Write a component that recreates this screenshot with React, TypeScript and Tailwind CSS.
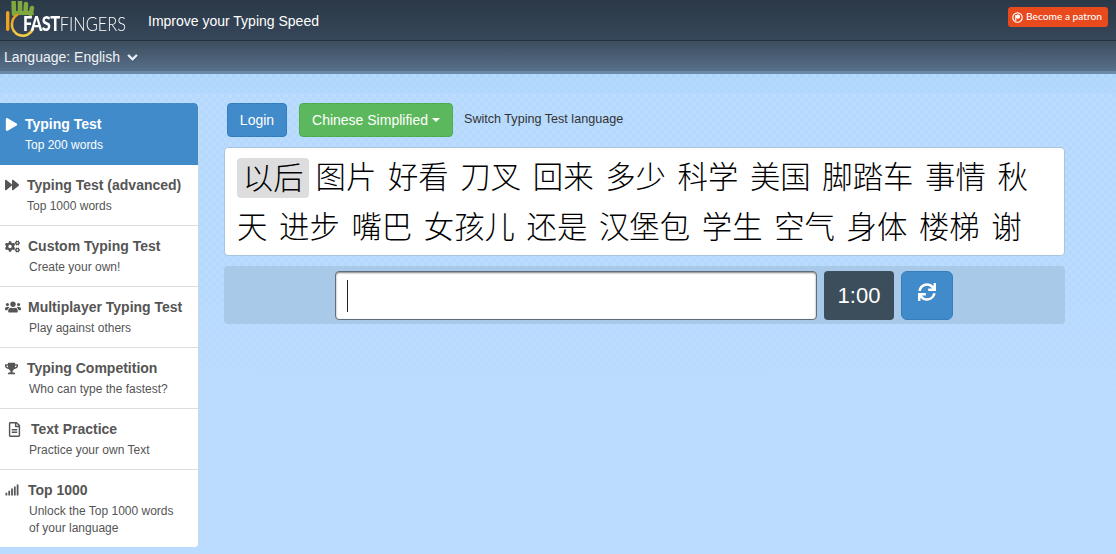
import React from 'react';
import { FaPlay, FaForward, FaCogs, FaUsers, FaTrophy, FaRegFileAlt, FaSignal, FaChevronDown, FaSync } from 'react-icons/fa';

const sans = { fontFamily: '"Liberation Sans", Arial, sans-serif' };

const menuItems = [
  { icon: <FaPlay size={13} />, title: 'Typing Test', sub: 'Top 200 words', active: true, iconBox: 'w-[25px] pl-[5px]', subPad: 'pl-[25px]' },
  { icon: <FaForward size={14} />, title: 'Typing Test (advanced)', sub: 'Top 1000 words', iconBox: 'w-[27px] pl-[5px]', subPad: 'pl-[27px]' },
  { icon: <FaCogs size={15} />, title: 'Custom Typing Test', sub: 'Create your own!', iconBox: 'w-[28px] pl-[5px]', subPad: 'pl-[29px]' },
  { icon: <FaUsers size={16} />, title: 'Multiplayer Typing Test', sub: 'Play against others', iconBox: 'w-[28px] pl-[5px]', subPad: 'pl-[29px]' },
  { icon: <FaTrophy size={13} />, title: 'Typing Competition', sub: 'Who can type the fastest?', iconBox: 'w-[27px] pl-[5px]', subPad: 'pl-[29px]' },
  { icon: <FaRegFileAlt size={15} />, title: 'Text Practice', sub: 'Practice your own Text', iconBox: 'w-[31px] pl-[7px]', subPad: 'pl-[29px]' },
  { icon: <FaSignal size={14} />, title: 'Top 1000', sub: 'Unlock the Top 1000 words of your language', iconBox: 'w-[28px] pl-[5px]', subPad: 'pl-[29px] pr-[20px]' },
];

const words = ['图片', '好看', '刀叉', '回来', '多少', '科学', '美国', '脚踏车', '事情', '秋天', '进步', '嘴巴', '女孩儿', '还是', '汉堡包', '学生', '空气', '身体', '楼梯', '谢'];

const Logo = () => (
  <div className="relative w-[130px] h-[40px] shrink-0">
    <svg width="130" height="40" viewBox="0 0 130 40" className="absolute left-0 top-0">
      <defs>
        <linearGradient id="ring" x1="0" y1="0" x2="0" y2="1">
          <stop offset="0" stopColor="#e99a1f" />
          <stop offset="1" stopColor="#f6cf45" />
        </linearGradient>
      </defs>
      {/* hand */}
      <g stroke="#7fa83e" strokeWidth="4.5" strokeLinecap="round" fill="none">
        <path d="M14 13 L13.5 -2" />
        <path d="M20 12 L20 0" />
        <path d="M25.5 12 L26 3" />
        <path d="M30.5 13 L32 7" />
      </g>
      <path d="M12 10 H33 L34 14 H12 Z" fill="#7fa83e" />
      {/* one */}
      <rect x="6" y="10" width="3.4" height="20" rx="1.7" fill="#eea323" />
      {/* zero */}
      <path d="M17 14 A11 11 0 0 0 12 22 A11 11 0 0 0 33 28" fill="none" stroke="url(#ring)" strokeWidth="2.6" strokeLinecap="round" />
    </svg>
    <span
      className="absolute left-[23px] top-[11px] text-[20px] leading-[22px] text-white origin-left scale-x-[0.82] whitespace-nowrap"
      style={{ fontFamily: 'Lato, sans-serif' }}
    >
      <span className="font-black tracking-[-0.6px]">FAST</span>
      <span className="font-light">FINGERS</span>
    </span>
  </div>
);

const PatronMark = () => (
  <svg width="11" height="11" viewBox="0 0 14 14" className="shrink-0">
    <circle cx="7" cy="7" r="6" fill="none" stroke="#fff" strokeWidth="1.5" />
    <circle cx="7.6" cy="6" r="2.7" fill="#fff" />
    <rect x="4" y="4" width="1.5" height="7" fill="#fff" />
  </svg>
);

const MenuItem = ({ item, last }: { item: (typeof menuItems)[number]; last: boolean }) => (
  <div
    className={`block ${item.active ? 'h-[62px] bg-[#428bca] text-white rounded-tr-[4px] pt-[12px]' : 'text-[#555555] pt-[11px]'} ${
      !item.active && !last ? 'h-[61px] border-b border-[#dddddd]' : ''
    } ${last ? 'h-[77px]' : ''}`}
  >
    <div className="flex items-center h-[18px]">
      <span className={`${item.iconBox} flex items-center`}>{item.icon}</span>
      <span className="text-[14px] font-bold leading-[18px] whitespace-nowrap">{item.title}</span>
    </div>
    <p className={`${item.subPad} text-[12px] leading-[17px] mt-[4px]`}>{item.sub}</p>
  </div>
);

export default function App() {
  return (
    <div className="h-[554px] w-[1116px] overflow-hidden bg-[#bbdcfe] text-[#333333]" style={sans}>
      {/* Header */}
      <header>
        <div className="h-[41px] flex items-center bg-gradient-to-b from-[#2b3947] to-[#36475a] border-b border-[#26323d]">
          <div className="pt-[1px]">
            <Logo />
          </div>
          <span className="ml-[18px] pt-[2px] text-[14px] text-white">Improve your Typing Speed</span>
          <a
            className="ml-auto mr-[8px] mb-[6px] w-[100px] h-[20px] pl-[4px] rounded-[3px] bg-[#e8491d] text-white text-[10.2px] font-medium flex items-center gap-[3px] whitespace-nowrap"
            style={{ fontFamily: 'Lato, sans-serif' }}
          >
            <PatronMark />
            Become a patron
          </a>
        </div>
        <div className="h-[33px] flex items-center bg-gradient-to-b from-[#3c4d5e] to-[#58708a] border-b-[3px] border-[#6b8aa8] pl-[4px] pt-[2px] text-[14px] text-[#eef2f5]">
          Language: English
          <FaChevronDown size={11} className="ml-[7px] mt-[1px] stroke-current stroke-[30]" />
        </div>
      </header>

      {/* Main */}
      <main className="relative flex items-start pt-[29px] h-[480px] bg-gradient-to-b from-[#abd6fb] from-[0px] via-[#afd8fc] via-[19px] to-[#bbdcfe] to-[20px]">
        {/* dither texture that fades out down the page */}
        <div className="absolute inset-0 pointer-events-none bg-[repeating-conic-gradient(#b4d9fd_0_25%,transparent_0_50%)] bg-[length:8px_8px] [mask-image:linear-gradient(to_bottom,black_0px,black_200px,transparent_320px)]" />

        <nav className="relative w-[199px] shrink-0 bg-white rounded-r-[4px] overflow-hidden border-r border-[#c9d9e8]">
          {menuItems.map((item, i) => (
            <MenuItem key={item.title} item={item} last={i === menuItems.length - 1} />
          ))}
        </nav>

        <section className="relative w-[841px] ml-[25px]">
          <div className="flex items-start ml-[3px] h-[44px]">
            <button className="w-[60px] h-[34px] rounded-[4px] bg-[#428bca] border border-[#357ebd] text-white text-[14px]">Login</button>
            <button className="ml-[12px] w-[154px] h-[34px] rounded-[4px] bg-[#5cb85c] border border-[#4cae4c] text-white text-[14px] flex items-center justify-center gap-[4px]">
              Chinese Simplified
              <span className="w-0 h-0 border-x-[4px] border-x-transparent border-t-[4px] border-t-white" />
            </button>
            <span className="ml-[11px] mt-[8px] text-[12.6px] leading-[17px]">Switch Typing Test language</span>
          </div>

          <div
            className="h-[109px] bg-white border border-[#a9c4de] rounded-[4px] pl-[12px] pr-[30px] pt-[2px] text-[30.4px] leading-[50px] text-black font-light overflow-hidden"
            style={{ fontFamily: '"Noto Sans CJK SC", sans-serif' }}
          >
            <span className="inline-block h-[40px] leading-[36px] pl-[5.8px] pr-[5.4px] mr-[0.8px] mt-[8px] bg-[#dddddd] rounded-[4px] align-top">以后</span>
            {words.map((w) => (
              <span key={w} className="px-[5.8px]">{w}</span>
            ))}
          </div>

          <div className="mt-[10px] h-[58px] bg-[#a8c9e8] rounded-[4px] flex justify-center items-start pt-[5px] pr-[1px] gap-[7px]">
            <div className="w-[482px] h-[49px] bg-white rounded-[4px] border border-[#5f6e7c] shadow-[inset_0_1px_2px_rgba(0,0,0,0.5)] flex items-center pl-[11px]">
              <span className="block w-px h-[32px] bg-[#222222]" />
            </div>
            <div className="w-[70px] h-[49px] bg-[#3c4d5c] rounded-[4px] text-white text-[22px] flex items-center justify-center">1:00</div>
            <button className="w-[52px] h-[49px] bg-[#428bca] border border-[#357ebd] rounded-[6px] text-white flex items-center justify-center pb-[7px]">
              <FaSync size={18} />
            </button>
          </div>
        </section>
      </main>
    </div>
  );
}
